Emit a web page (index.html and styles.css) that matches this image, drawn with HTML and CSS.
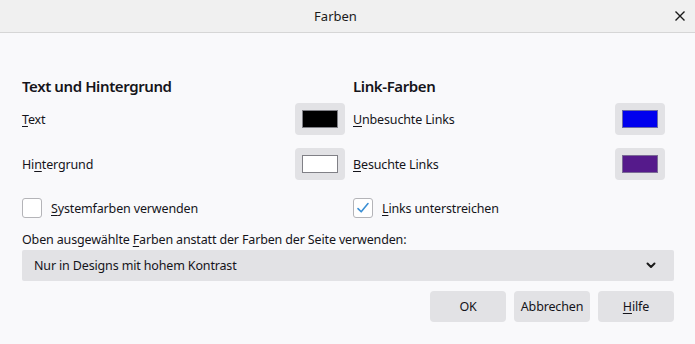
FILE: index.html
```html
<!DOCTYPE html>
<html lang="de">
<head>
<meta charset="utf-8">
<title>Farben</title>
<link rel="stylesheet" href="styles.css">
</head>
<body>
<div class="dialog">
  <header class="titlebar">
    <span class="title">Farben</span>
    <span class="close" aria-label="Schließen">
      <svg width="10" height="10" viewBox="0 0 10 10"><path d="M0.5 0.5 L9.5 9.5 M9.5 0.5 L0.5 9.5" stroke="#1a1a1a" stroke-width="1.4" fill="none"/></svg>
    </span>
  </header>
  <main class="content">
    <div class="columns">
      <section class="col col-left">
        <h2 class="heading">Text und Hintergrund</h2>
        <div class="row">
          <span class="label"><u>T</u>ext</span>
          <span class="swatch-btn"><span class="swatch swatch-black"></span></span>
        </div>
        <div class="row row-second">
          <span class="label">Hi<u>n</u>tergrund</span>
          <span class="swatch-btn"><span class="swatch swatch-white"></span></span>
        </div>
        <label class="check-row">
          <span class="checkbox"></span>
          <span class="label"><u>S</u>ystemfarben verwenden</span>
        </label>
      </section>
      <section class="col col-right">
        <h2 class="heading">Link-Farben</h2>
        <div class="row">
          <span class="label"><u>U</u>nbesuchte Links</span>
          <span class="swatch-btn"><span class="swatch swatch-blue"></span></span>
        </div>
        <div class="row row-second">
          <span class="label"><u>B</u>esuchte Links</span>
          <span class="swatch-btn"><span class="swatch swatch-purple"></span></span>
        </div>
        <label class="check-row">
          <span class="checkbox checked">
            <svg width="14" height="14" viewBox="0 0 14 14"><path d="M2 7.6 L5.2 10.8 L12 2.6" stroke="#3b8fd4" stroke-width="1.6" fill="none" stroke-linecap="round" stroke-linejoin="round"/></svg>
          </span>
          <span class="label"><u>L</u>inks unterstreichen</span>
        </label>
      </section>
    </div>
    <p class="caption">Oben ausgewählte <u>F</u>arben anstatt der Farben der Seite verwenden:</p>
    <div class="select">
      <span class="select-text">Nur in Designs mit hohem Kontrast</span>
      <svg class="chevron" width="10" height="7" viewBox="0 0 10 7"><path d="M1.5 1.5 L5 5 L8.5 1.5" stroke="#1a1a1a" stroke-width="2" fill="none" stroke-linecap="round" stroke-linejoin="round"/></svg>
    </div>
    <div class="actions">
      <span class="btn">OK</span>
      <span class="btn">Abbrechen</span>
      <span class="btn"><u>H</u>ilfe</span>
    </div>
  </main>
</div>
</body>
</html>
```
FILE: styles.css
```css
* { box-sizing: border-box; }
html, body {
  margin: 0;
  padding: 0;
  background: #f9f9fb;
}
body {
  width: 695px;
  height: 344px;
  overflow: hidden;
  font-family: "Noto Sans", "Open Sans", sans-serif;
  font-size: 12.5px;
  letter-spacing: -0.15px;
  color: #15141a;
}
u { text-decoration-thickness: 1px; text-underline-offset: 2px; }

.titlebar {
  height: 33px;
  background: #f0f0f0;
  border-bottom: 1px solid #d6d6d6;
  display: flex;
  align-items: center;
  position: relative;
}
.title {
  flex: 1;
  text-align: center;
  padding-right: 24px;
  font-size: 13px;
  letter-spacing: 0;
  color: #1a1a1a;
}
.close {
  position: absolute;
  right: 10px;
  top: 11px;
  width: 10px;
  height: 10px;
  display: flex;
}

.content {
  padding: 43px 21px 0 22px;
}
.columns {
  display: grid;
  grid-template-columns: 323px 312px;
  column-gap: 8px;
}
.col { display: flex; flex-direction: column; }
.heading {
  margin: 0;
  font-size: 15px;
  letter-spacing: -0.4px;
  font-weight: 600;
  line-height: 20px;
  height: 20px;
}
.row {
  display: flex;
  align-items: center;
  justify-content: space-between;
  height: 32px;
  margin-top: 7px;
}
.row-second { margin-top: 13px; }
.swatch-btn {
  width: 50px;
  height: 32px;
  background: #e2e2e5;
  border-radius: 4px;
  display: flex;
  align-items: center;
  justify-content: center;
}
.swatch {
  width: 36px;
  height: 18px;
  border: 1px solid #808086;
}
.swatch-black { background: #000000; }
.swatch-white { background: #ffffff; }
.swatch-blue { background: #0000ee; border-color: #6a6aa8; }
.swatch-purple { background: #551a8b; border-color: #7a6a95; }

.check-row {
  display: flex;
  align-items: center;
  gap: 9px;
  height: 20px;
  margin-top: 18px;
}
.checkbox {
  width: 20px;
  height: 20px;
  border: 1px solid #b4b4b8;
  border-radius: 3px;
  background: #ffffff;
  display: flex;
  align-items: center;
  justify-content: center;
}

.caption {
  margin: 14px 0 0;
  line-height: 16px;
}
.select {
  margin-top: 2px;
  height: 31px;
  background: #e2e2e5;
  border-radius: 2px;
  display: flex;
  align-items: center;
  justify-content: space-between;
  padding: 0 18px 0 12px;
}
.chevron { display: block; }

.actions {
  display: flex;
  justify-content: flex-end;
  gap: 8px;
  margin-top: 10px;
}
.btn {
  width: 76px;
  height: 31px;
  background: #e2e2e5;
  border-radius: 4px;
  display: flex;
  align-items: center;
  justify-content: center;
}
```
